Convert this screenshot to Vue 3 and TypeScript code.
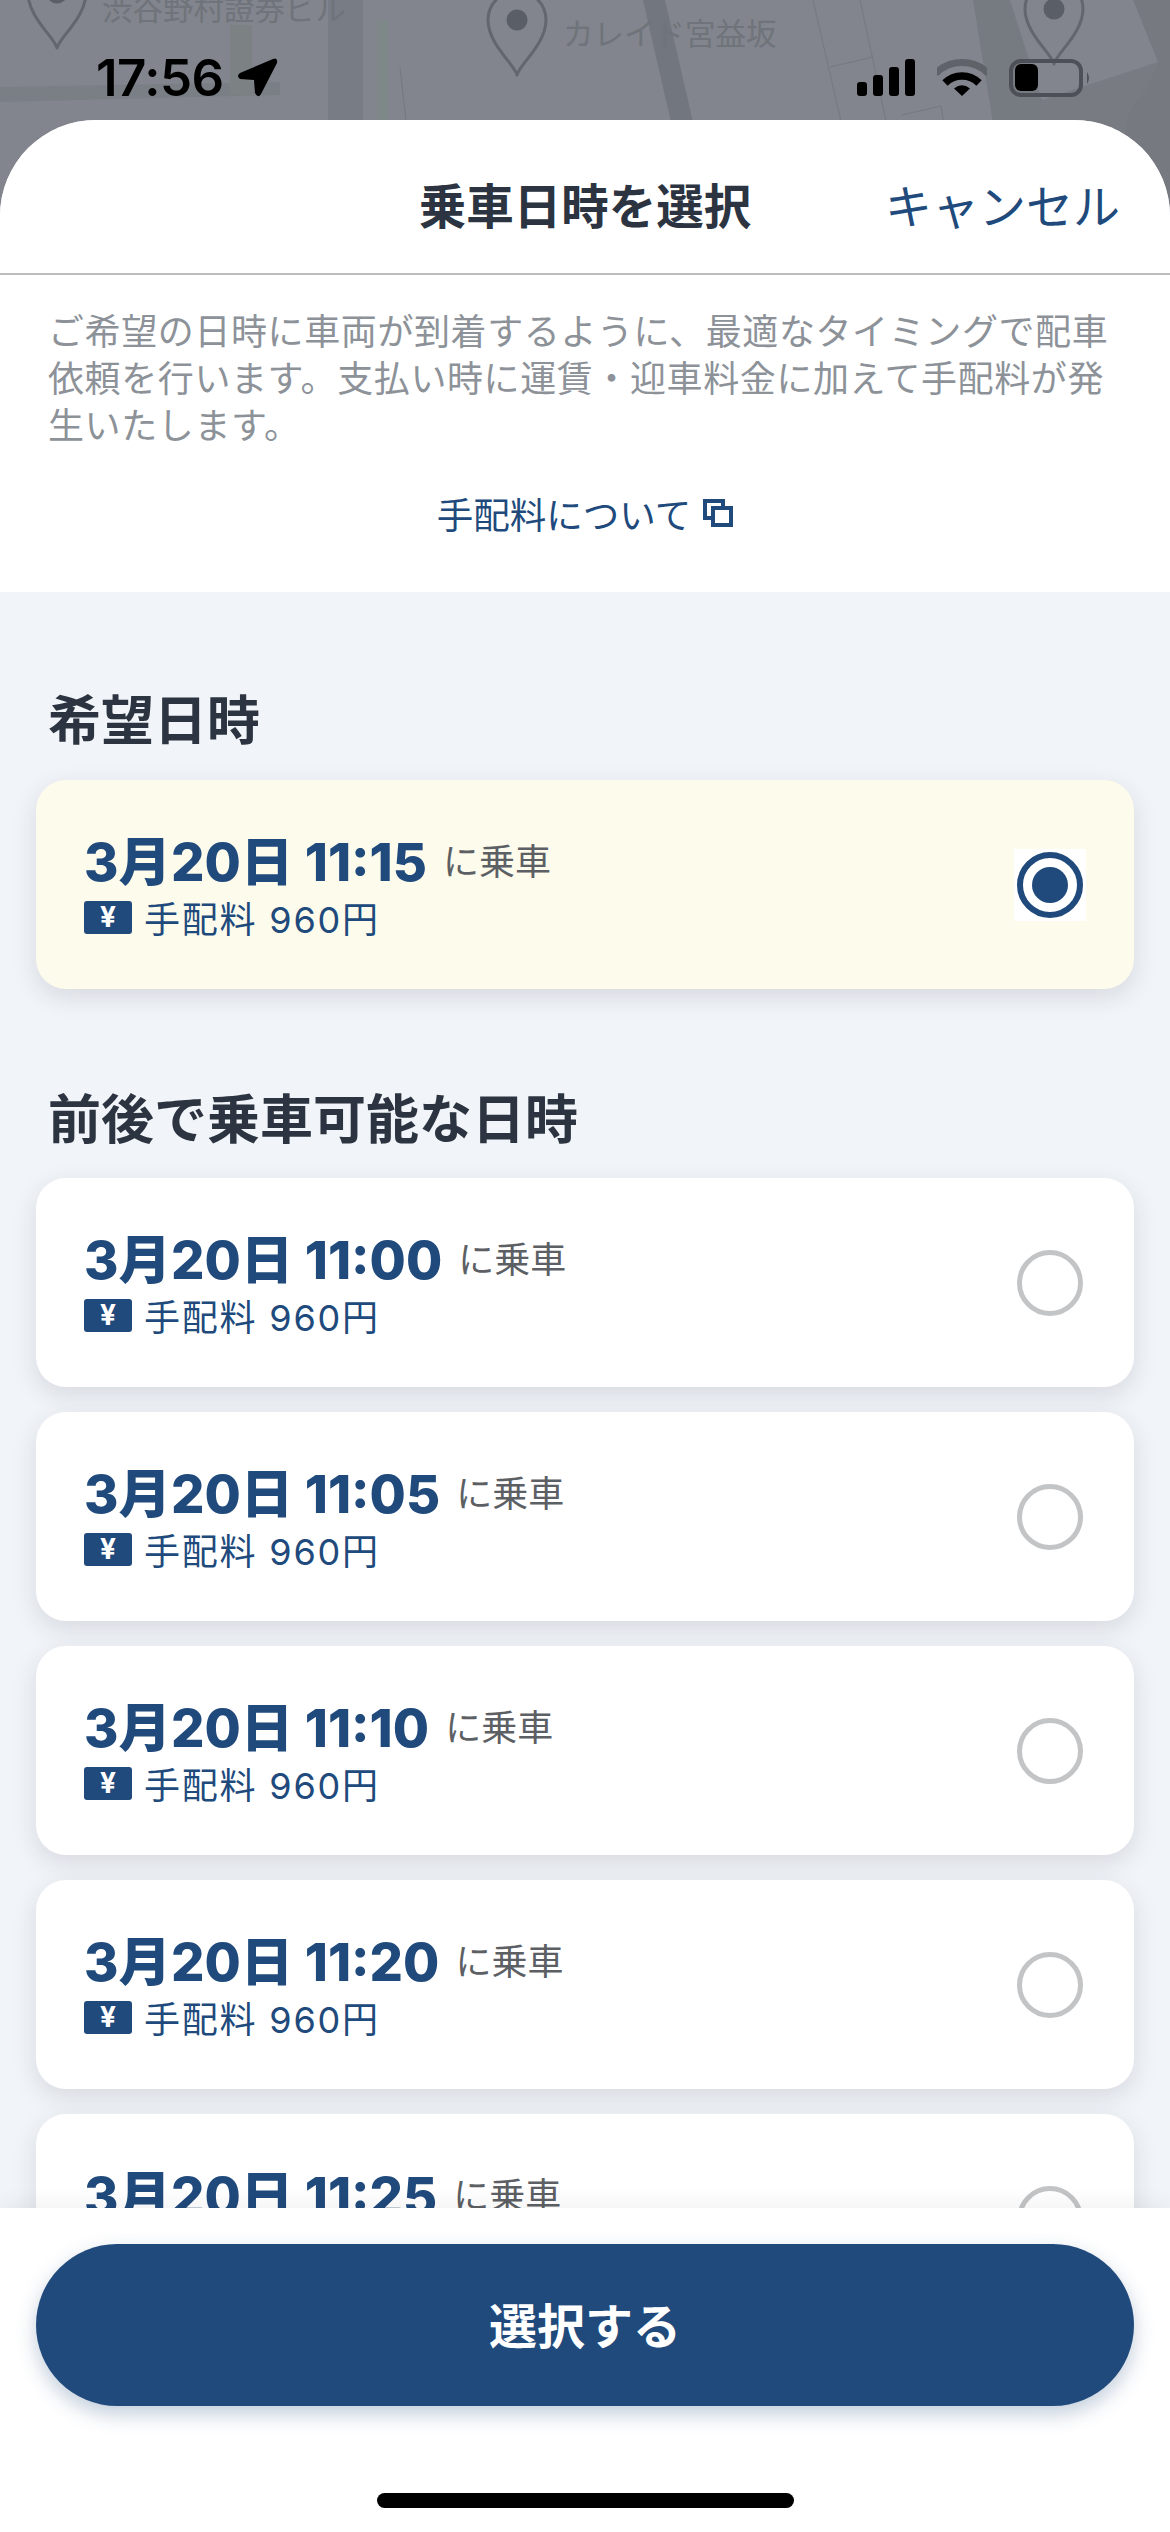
<template>
  <div class="screen">
    <svg class="map" viewBox="0 0 1170 240" width="1170" height="240">
      <rect width="1170" height="240" fill="#82858d" />
      <polygon points="0,87 280,82 280,95 0,102" fill="#7a7e85" />
      <rect x="230" y="25" width="22" height="70" fill="#7c8183" />
      <rect x="328" y="0" width="35" height="240" fill="#777c85" />
      <rect x="377" y="20" width="11" height="220" fill="#7f8889" />
      <polygon points="643,0 665,0 720,240 698,240" fill="#72767e" />
      <polygon points="973,0 1010,0 1042,100 1030,240 1012,240" fill="#767a81" />
      <polygon points="1133,0 1170,0 1170,240 1100,240 1130,108 1145,90 1158,62" fill="#767a80" />
      <polygon points="1042,100 1158,62 1145,90 1130,108 1100,240 1030,240" fill="#787b82" />
      <g fill="none" stroke="#74787f" stroke-width="1">
        <path d="M813 0 L843 130" />
        <path d="M860 0 L888 130" />
        <path d="M830 67 L873 57" />
        <path d="M902 115 L941 106 L945 130" />
        <path d="M400 68 L406 120" />
      </g>
      <g v-for="pin in pins" :key="pin.x" :transform="`translate(${pin.x} ${pin.y})`">
        <path
          d="M0 55 C-2 45 -29 24 -29 0 A29 29 0 0 1 29 0 C29 24 2 45 0 55Z"
          fill="none"
          stroke="#62666e"
          stroke-width="3"
          stroke-linejoin="round"
        />
        <circle r="10.5" fill="#5a5e67" />
      </g>
      <text x="102" y="20" class="map-label">渋谷野村證券ビル</text>
      <text x="563" y="45" class="map-label">カレイド宮益坂</text>
    </svg>

    <div class="status-bar">
      <div class="status-left">
        <span class="clock">17:56</span>
        <svg width="42" height="40" viewBox="240 59 42 40">
          <path d="M277 60 L244 74 Q240 77 244 80 L258 81 L259 94 Q262 100 265 95 L281 64 Q282 58 277 60Z" fill="#000" />
        </svg>
      </div>
      <div class="status-right">
        <svg width="58" height="37" viewBox="0 0 58 37">
          <rect x="0" y="23" width="10" height="14" rx="3" />
          <rect x="16" y="16" width="10" height="21" rx="3" />
          <rect x="32" y="8" width="10" height="29" rx="3" />
          <rect x="48" y="0" width="10" height="37" rx="3" />
        </svg>
        <svg width="50" height="37" viewBox="0 0 50 37">
          <path d="M-1.5 14.5 A37.5 37.5 0 0 1 51.5 14.5" fill="none" stroke="#5f6369" stroke-width="7" />
          <path d="M8 24 A24 24 0 0 1 42 24" fill="none" stroke="#000" stroke-width="7.5" />
          <path d="M25 37 L17 29.500 Q25 23 33 29.500Z" fill="#000" />
        </svg>
        <svg width="82" height="38" viewBox="0 0 82 38">
          <rect x="2" y="2" width="70" height="34" rx="10" fill="none" stroke="#4d5056" stroke-width="4" />
          <rect x="6" y="5" width="23" height="27" rx="6" fill="#000" />
          <path d="M78 13 Q82 19 78 25Z" fill="#4d5056" />
        </svg>
      </div>
    </div>

    <div class="sheet">
      <header class="sheet-header">
        <span></span>
        <h1 class="title">乗車日時を選択</h1>
        <span class="cancel">キャンセル</span>
      </header>

      <section class="intro">
        <p class="intro-text">
          ご希望の日時に車両が到着するように、最適なタイミングで配車依頼を行います。支払い時に運賃・迎車料金に加えて手配料が発生いたします。
        </p>
        <div class="intro-link">
          <span>手配料について</span>
          <svg width="30" height="28" viewBox="0 0 30 28">
            <rect x="2" y="2" width="18" height="17" fill="#fff" stroke="#204a7c" stroke-width="4" />
            <rect x="10" y="9" width="18" height="17" fill="#fff" stroke="#204a7c" stroke-width="4" />
          </svg>
        </div>
      </section>

      <main class="list">
        <h2 class="section-title">希望日時</h2>
        <div class="card card--selected">
          <div class="card-body">
            <div class="card-date"><b>{{ selected }}</b><span>に乗車</span></div>
            <div class="card-fee"><i class="yen">¥</i>手配料 960円</div>
          </div>
          <div class="radio"><span class="ring ring--on"></span></div>
        </div>

        <h2 class="section-title section-title--second">前後で乗車可能な日時</h2>
        <div class="cards">
          <div v-for="slot in others" :key="slot" class="card">
            <div class="card-body">
              <div class="card-date"><b>{{ slot }}</b><span>に乗車</span></div>
              <div class="card-fee"><i class="yen">¥</i>手配料 960円</div>
            </div>
            <div class="radio"><span class="ring"></span></div>
          </div>
        </div>
      </main>
    </div>

    <footer class="footer">
      <button class="submit" type="button">選択する</button>
      <div class="home-bar"></div>
    </footer>
  </div>
</template>

<script setup lang="ts">
const pins = [
  { x: 57, y: -7 },
  { x: 517, y: 20 },
  { x: 1054, y: 9 },
]

const selected = '3月20日 11:15'

const others: string[] = [
  '3月20日 11:00',
  '3月20日 11:05',
  '3月20日 11:10',
  '3月20日 11:20',
  '3月20日 11:25',
]
</script>

<style>
html,
body {
  margin: 0;
  padding: 0;
  background: #82858d;
}
</style>

<style scoped>
.screen {
  position: relative;
  width: 1170px;
  height: 2532px;
  overflow: hidden;
  font-family: Inter, "Noto Sans CJK JP", sans-serif;
  background: #f1f4f8;
}

.map { position: absolute; top: 0; left: 0; }
.map-label { font-family: "Noto Sans CJK JP", sans-serif; font-size: 30.5px; fill: #6f737a; }

.status-bar {
  position: absolute;
  top: 58px;
  left: 0;
  right: 0;
  display: flex;
  justify-content: space-between;
  align-items: flex-start;
  padding: 0 79px 0 96px;
}
.status-left { display: flex; align-items: center; gap: 12px; height: 40px; }
.clock { font-size: 51px; font-weight: 600; line-height: 40px; letter-spacing: -0.5px; color: #000; }
.status-right { display: flex; align-items: flex-start; gap: 22px; padding-top: 1px; }

.sheet {
  position: absolute;
  top: 120px;
  left: 0;
  right: 0;
  bottom: 0;
  background: #f1f4f8;
  border-radius: 96px 96px 0 0;
  overflow: hidden;
}

.sheet-header {
  display: grid;
  grid-template-columns: 1fr auto 1fr;
  align-items: center;
  height: 155px;
  padding: 14px 50px 0;
  box-sizing: border-box;
  background: #fff;
  border-bottom: 2px solid #bcbdbe;
}
.title { margin: 0; font-size: 47.5px; font-weight: 700; color: #2b3440; }
.cancel { justify-self: end; font-size: 47px; color: #204a7c; white-space: nowrap; }

.intro {
  padding: 34px 48px 54px;
  background: #fff;
}
.intro-text {
  margin: 0;
  font-size: 36px;
  letter-spacing: 0.6px;
  line-height: 47px;
  color: #8d9299;
}
.intro-link {
  display: flex;
  justify-content: center;
  align-items: center;
  gap: 12px;
  height: 50px;
  margin-top: 38px;
  font-size: 36.5px;
  color: #204a7c;
}

.list { padding: 0 36px; }
.section-title {
  margin: 0;
  padding: 99px 12px 29px;
  font-size: 53px;
  font-weight: 700;
  line-height: 60px;
  color: #2b3440;
}
.section-title--second { padding-top: 101px; padding-bottom: 28px; }

.cards { display: flex; flex-direction: column; gap: 25px; }

.card {
  display: flex;
  justify-content: space-between;
  align-items: center;
  height: 209px;
  padding: 0 48px;
  box-sizing: border-box;
  background: #fff;
  border-radius: 30px;
  box-shadow: 0 8px 24px rgba(40, 50, 70, 0.13);
}
.card--selected { background: #fdfbec; }

.card-body { display: flex; flex-direction: column; gap: 5px; }
.card-date {
  display: flex;
  align-items: center;
  gap: 16px;
  height: 60px;
  line-height: 60px;
}
.card-date b { font-size: 52.5px; font-weight: 800; color: #204a7c; }
.card-date span { font-size: 36px; color: #5c6064; }

.card-fee {
  display: flex;
  align-items: center;
  gap: 12px;
  height: 40px;
  font-size: 36px;
  letter-spacing: 1.8px;
  color: #204a7c;
}
.yen {
  display: flex;
  justify-content: center;
  align-items: center;
  width: 48px;
  height: 33px;
  border-radius: 3px;
  background: #204a7c;
  color: #fff;
  font-size: 28px;
  font-style: normal;
  font-weight: 700;
  letter-spacing: 0;
}

.radio {
  display: flex;
  justify-content: center;
  align-items: center;
  width: 72px;
  height: 72px;
  background: #fff;
}
.ring {
  width: 66px;
  height: 66px;
  box-sizing: border-box;
  border: 5px solid #c2c4c6;
  border-radius: 50%;
}
.ring--on {
  display: flex;
  justify-content: center;
  align-items: center;
  border: 6px solid #204a7c;
}
.ring--on::after {
  content: "";
  width: 36px;
  height: 36px;
  border-radius: 50%;
  background: #204a7c;
}

.footer {
  position: absolute;
  top: 2208px;
  left: 0;
  right: 0;
  bottom: 0;
  padding: 36px 36px 0;
  background: #fff;
  box-shadow: 0 -4px 20px rgba(0, 0, 0, 0.06);
}
.submit {
  display: block;
  width: 100%;
  height: 162px;
  padding: 0 0 5px;
  border: 0;
  border-radius: 81px;
  background: #204a7c;
  box-shadow: 0 8px 20px rgba(32, 74, 124, 0.28);
  color: #fff;
  font-family: inherit;
  font-size: 48px;
  font-weight: 700;
}
.home-bar {
  position: absolute;
  left: 377px;
  bottom: 24px;
  width: 417px;
  height: 15px;
  border-radius: 8px;
  background: #000;
}
</style>
